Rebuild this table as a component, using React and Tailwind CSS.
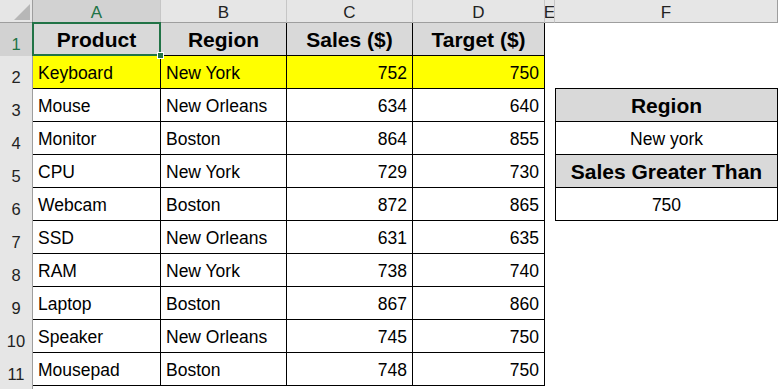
const rows = [
  ["Keyboard", "New York", 752, 750],
  ["Mouse", "New Orleans", 634, 640],
  ["Monitor", "Boston", 864, 855],
  ["CPU", "New York", 729, 730],
  ["Webcam", "Boston", 872, 865],
  ["SSD", "New Orleans", 631, 635],
  ["RAM", "New York", 738, 740],
  ["Laptop", "Boston", 867, 860],
  ["Speaker", "New Orleans", 745, 750],
  ["Mousepad", "Boston", 748, 750],
];

// criteria box in column F, keyed by sheet row
const criteria = {
  3: { text: "Region", head: true },
  4: { text: "New york" },
  5: { text: "Sales Greater Than", head: true },
  6: { text: "750" },
};

function ColHead({ label, selected, last }) {
  return (
    <div
      className={`flex items-center justify-center overflow-hidden border-b border-b-[#9e9e9e] ${
        last ? "border-r border-r-[#9e9e9e]" : "border-r border-r-[#c6c6c6]"
      } text-[17px] leading-none pt-[3px] ${
        selected ? "bg-[#d2d2d2] text-[#217346]" : "bg-[#e6e6e6] text-[#222]"
      }`}
    >
      {label}
    </div>
  );
}

function RowHead({ n, selected }) {
  return (
    <div
      className={`flex items-end justify-center pb-[4px] border-r border-r-[#9e9e9e] text-[16.5px] leading-none ${
        selected ? "bg-[#d2d2d2] text-[#217346]" : "bg-[#e6e6e6] text-[#222]"
      }`}
    >
      {n}
    </div>
  );
}

function Cell({ children, align = "left", bold, fill }) {
  const justify =
    align === "right" ? "justify-end pr-[5px]" : align === "center" ? "justify-center" : "justify-start pl-[5px]";
  return (
    <div
      className={`flex items-center ${justify} border-r border-b border-black whitespace-nowrap overflow-hidden ${
        bold ? "font-bold text-[21px] pt-[2px]" : "text-[17.5px] pt-[3px]"
      } ${fill || "bg-white"}`}
    >
      {children}
    </div>
  );
}

function CriteriaCell({ r }) {
  const c = criteria[r];
  if (r === 2) return <div className="border-b border-black bg-white" />;
  if (!c) return <div className="bg-white" />;
  return (
    <div
      className={`flex items-center justify-center border-l border-r border-b border-black whitespace-nowrap ${
        c.head ? "bg-[#d9d9d9] font-bold text-[21px] pt-[2px]" : "bg-white text-[17.5px] pt-[3px]"
      }`}
    >
      {c.text}
    </div>
  );
}

export default function App() {
  return (
    <div
      className="relative w-[778px] h-[389px] overflow-hidden bg-white text-black"
      style={{ fontFamily: '"Liberation Sans", Arial, sans-serif' }}
    >
      <div className="grid grid-cols-[33px_128px_126px_126px_132px_10px_223px] grid-rows-[23px_repeat(12,33px)]">
        {/* corner */}
        <div className="relative bg-[#e6e6e6] border-r border-b border-[#9e9e9e]">
          <svg className="absolute left-[14px] top-[4px]" width="16" height="16" viewBox="0 0 16 16">
            <polygon points="16,0 16,16 0,16" fill="#b7b7b7" />
          </svg>
        </div>
        <ColHead label="A" selected />
        <ColHead label="B" />
        <ColHead label="C" />
        <ColHead label="D" />
        <ColHead label="E" />
        <ColHead label="F" last />

        {/* row 1 */}
        <RowHead n={1} selected />
        <Cell bold align="center" fill="bg-[#d9d9d9]">Product</Cell>
        <Cell bold align="center" fill="bg-[#d9d9d9]">Region</Cell>
        <Cell bold align="center" fill="bg-[#d9d9d9]">Sales ($)</Cell>
        <Cell bold align="center" fill="bg-[#d9d9d9]">Target ($)</Cell>
        <div className="bg-white" />
        <div className="bg-white" />

        {rows.map((row, i) => {
          const r = i + 2;
          const fill = i === 0 ? "bg-[#ffff00]" : "bg-white";
          return [
            <RowHead key={`h${r}`} n={r} />,
            <Cell key={`a${r}`} fill={fill}>{row[0]}</Cell>,
            <Cell key={`b${r}`} fill={fill}>{row[1]}</Cell>,
            <Cell key={`c${r}`} fill={fill} align="right">{row[2]}</Cell>,
            <Cell key={`d${r}`} fill={fill} align="right">{row[3]}</Cell>,
            <div key={`e${r}`} className="bg-white" />,
            <CriteriaCell key={`f${r}`} r={r} />,
          ];
        })}

        {/* row 12, cut off */}
        <div className="bg-[#e6e6e6] border-r border-r-[#9e9e9e]" />
      </div>

      {/* active cell A1 */}
      <div className="absolute left-[32px] top-[22px] w-[129px] h-[34px] border-2 border-[#217346]" />
      <div className="absolute left-[157px] top-[52px] w-[7px] h-[7px] bg-[#217346] border border-white" />
    </div>
  );
}
